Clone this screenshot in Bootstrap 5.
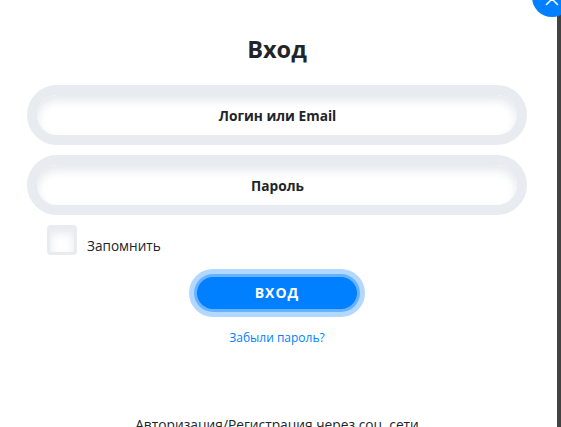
<!DOCTYPE html>
<html lang="ru"><head><meta charset="utf-8">
<link href="https://cdn.jsdelivr.net/npm/bootstrap@5.3.0/dist/css/bootstrap.min.css" rel="stylesheet">
<style>
html,body{height:427px;overflow:hidden;background:#424242;margin:0}
body{font-family:"Open Sans",sans-serif;color:#212529}
.sheet{width:557px;height:440px;background:#fff;border-radius:0 0 8px 0;padding:32px 30px 0 27px}
.sheet-title{font-size:23.5px;line-height:34px;font-weight:700;color:#212529;text-align:center;margin:0 0 19px}
.pill-input{display:block;width:500px;height:60px;border:10px solid #e8ebef;border-radius:30px;background:#fff;box-shadow:inset 0 5px 8px 1px #e8ebef;text-align:center;font-size:13.7px;font-weight:700;color:#212529;padding:0 0 0 1px;margin-bottom:10px;outline:0}
.pill-input::placeholder{color:#212529;opacity:1}
.remember{padding-left:20px;margin-top:10px;height:30px}
.tick{appearance:none;width:30px;height:30px;border:3px solid #e8ebef;border-radius:4px;background:#fff;box-shadow:inset 0 5px 8px 1px #e8ebef;margin:0}
.remember label{font-size:13.6px;line-height:19px;margin:11px 0 0 10px}
.enter-btn{width:160px;height:32px;border-radius:16px;background:#007fff;color:#fff;border:0;font-size:14px;font-weight:700;letter-spacing:1px;box-shadow:0 0 0 3px #66b2ff,0 0 0 8px #b3d8ff;padding:0;line-height:32px}
.btn-wrap{margin-top:22px;width:500px}
.forgot{font-size:12px;line-height:16px;color:#007fff;text-decoration:none;display:block;margin-top:21px;text-align:center;width:500px}
.soc{font-size:13.75px;line-height:18px;text-align:center;width:500px;margin-top:70px}
.closer{position:absolute;left:532px;top:-23px;width:40px;height:40px;border-radius:50%;background:#007fff;border:0;padding:0}
.closer svg{position:absolute;left:13px;top:15px}
</style></head><body>
<div class="sheet">
<h1 class="sheet-title">Вход</h1>
<form>
<input class="pill-input form-control-plaintext" type="text" placeholder="Логин или Email">
<input class="pill-input form-control-plaintext" type="password" placeholder="Пароль">
<div class="remember d-flex align-items-start"><input class="tick" type="checkbox" id="rem"><label for="rem">Запомнить</label></div>
<div class="btn-wrap d-flex justify-content-center"><button type="button" class="btn enter-btn">ВХОД</button></div>
<a href="#" class="forgot">Забыли пароль?</a>
<div class="soc">Авторизация/Регистрация через соц. сети</div>
</form>
</div>
<button class="closer" aria-label="Закрыть"><svg width="14" height="14" viewBox="0 0 14 14"><path d="M1 1l12 12M13 1L1 13" stroke="#fff" stroke-width="1.5"/></svg></button>
</body></html>
